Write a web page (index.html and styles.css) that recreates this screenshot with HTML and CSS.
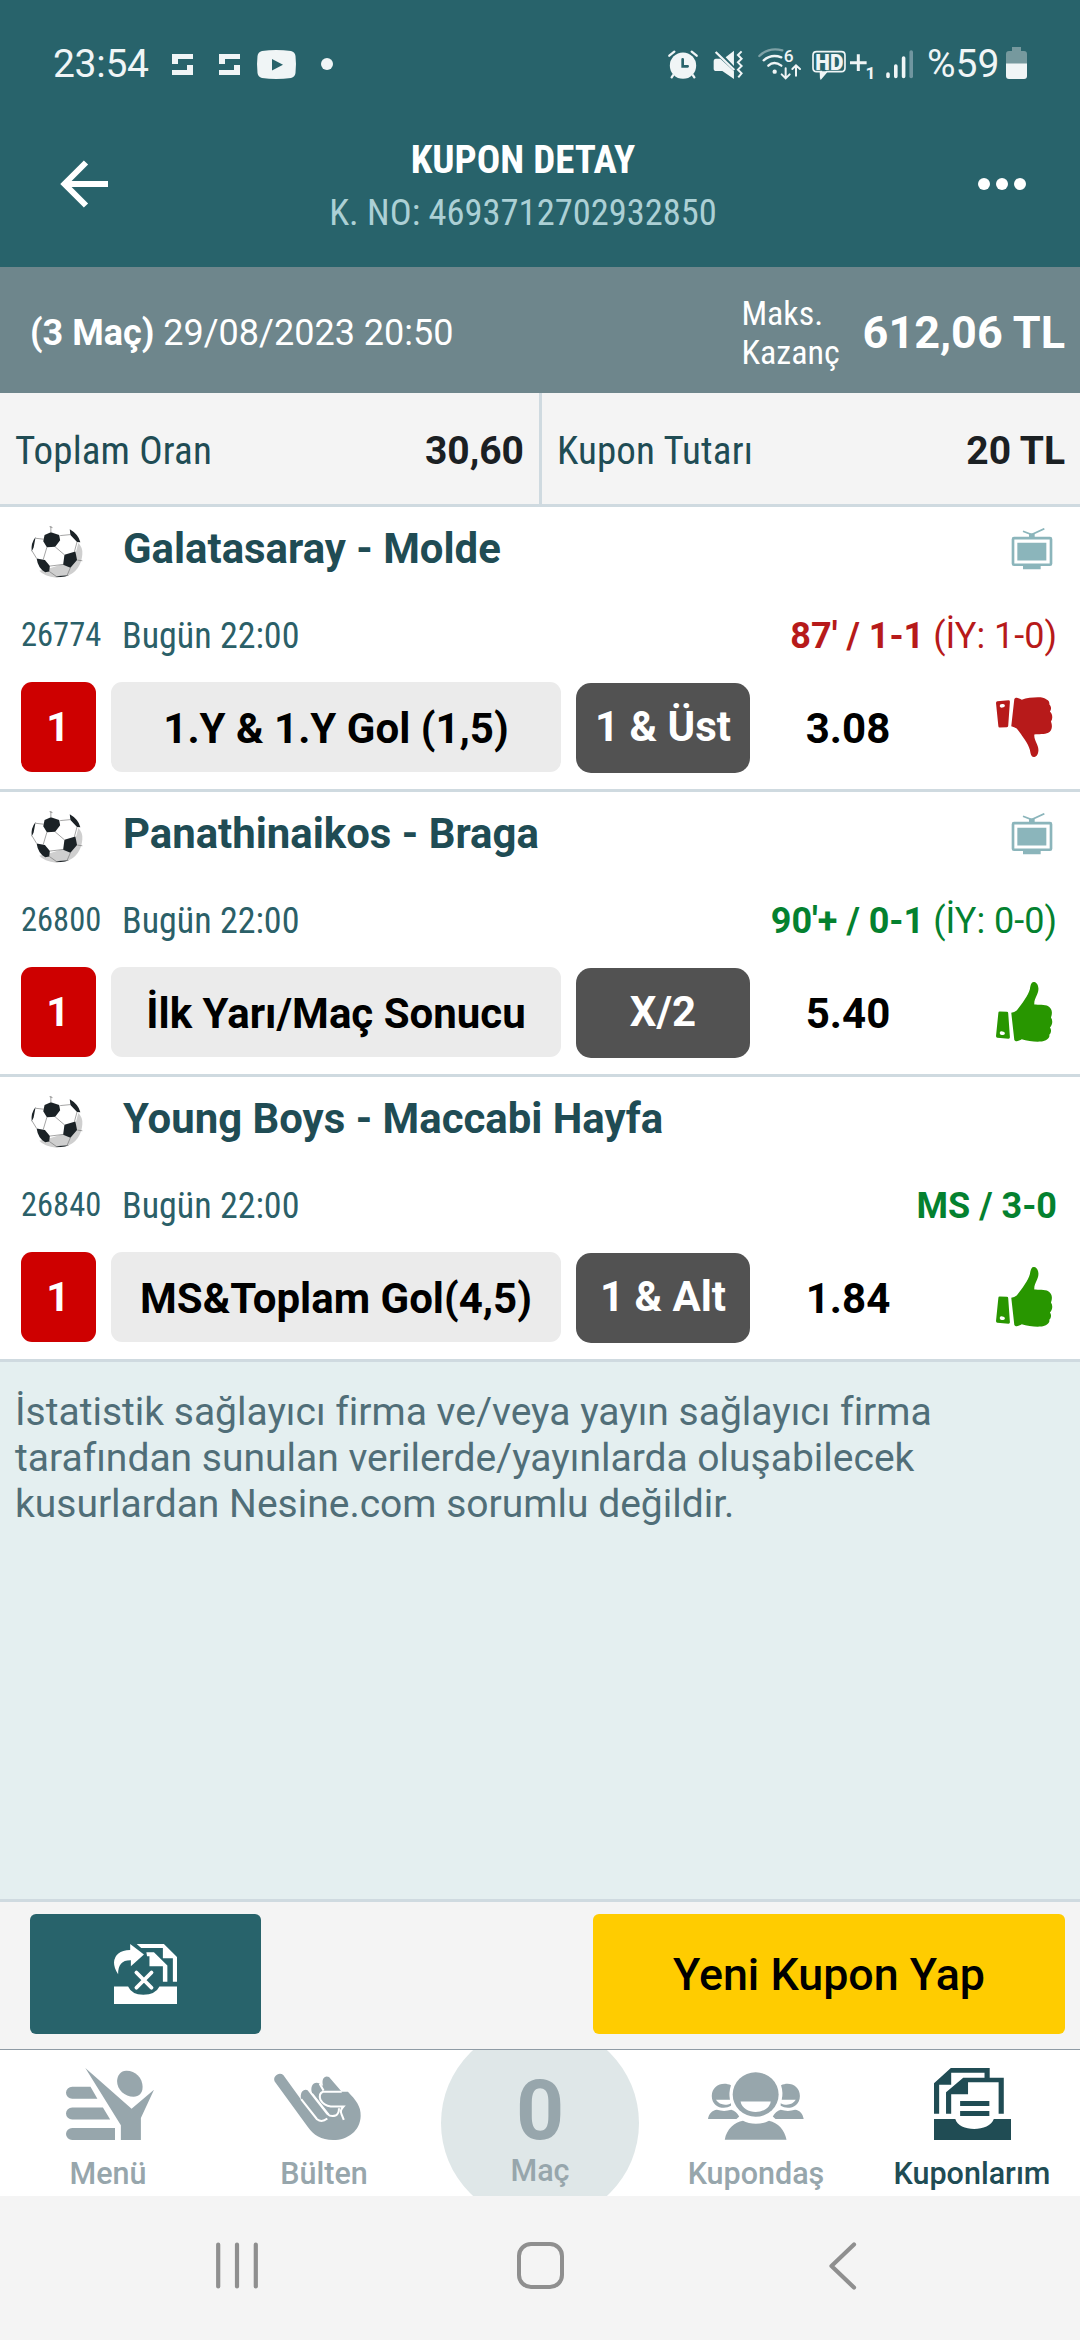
FILE: index.html
```
<!DOCTYPE html>
<html lang="tr">
<head>
<meta charset="utf-8">
<title>Kupon Detay</title>
<link rel="stylesheet" href="styles.css">
</head>
<body>
<svg class="defs" aria-hidden="true">
  <symbol id="ball" viewBox="30 30 160 160">
    <circle cx="111" cy="113" r="76" fill="#fff"/>
    <path d="M176 84Q190 98 188 118Q184 168 140 185L110 189Q72 184 58 168L92 160L130 148L150 156Q172 140 168 114Z" fill="#cfcfcf"/>
    <path d="M93 52L118 60L121 76L106 96L81 97L70 79L74 60ZM150 43Q176 58 182 82L172 81L152 60ZM47 66Q32 84 35 110L41 98ZM134 120L167 110L172 136L152 159L130 150ZM50 131L75 136L90 154L88 170L76 173Q54 160 50 131ZM106 185L148 182Q128 190 106 185Z" fill="#1b2226"/>
    <path d="M93 52V33M89 35L98 38M121 62L152 59M106 96L134 120M81 97L70 134M47 70L72 73M36 108L50 131M172 81L164 111M90 154L130 149M88 170L112 187M152 159L142 182M173 136L188 138" fill="none" stroke="#777" stroke-width="2"/>
  </symbol>
  <symbol id="tv" viewBox="1366 84 126 128" preserveAspectRatio="none">
    <rect x="1372" y="115" width="114" height="81" rx="3" fill="none" stroke="#8bb5bb" stroke-width="8"/>
    <path d="M1385 129h87v54h-87zM1402 198h53v12h-53zM1420 101h17v12h-17z" fill="#8bb5bb"/>
    <path d="M1402 94L1428 104L1466 86" fill="none" stroke="#8bb5bb" stroke-width="5"/>
  </symbol>
  <symbol id="thumb" viewBox="1324 590 168 181" preserveAspectRatio="none">
    <path d="M1328 603L1361 600Q1365 600 1365 604L1360 677Q1360 681 1356 681L1335 682Q1331 682 1331 678L1324 608Q1324 603 1328 603ZM1338 612Q1335 613 1335 618Q1336 623 1343 622Q1351 621 1350 615Q1349 610 1338 612Z" fill-rule="evenodd"/>
    <path d="M1378 596C1383 588 1392 594 1400 598C1418 591 1450 590 1462 592C1478 597 1483 605 1481 612C1487 618 1488 627 1483 634C1491 642 1492 655 1486 664C1492 680 1488 692 1478 698C1468 703 1448 702 1437 703C1435 722 1450 733 1449 752C1448 766 1441 771 1435 771C1428 771 1426 762 1424 750C1420 732 1400 705 1385 685Q1378 680 1369 678Z"/>
  </symbol>
</svg>

<header class="header">
  <div class="status">
    <span class="clock">23:54</span>
    <svg class="s-app" viewBox="0 0 21 21"><path d="M0 0H21V5H6V10H0ZM21 21H0V16H15V11H21Z" fill="#f0f5f6"/></svg>
    <svg class="s-app s-app2" viewBox="0 0 21 21"><path d="M0 0H21V5H6V10H0ZM21 21H0V16H15V11H21Z" fill="#f0f5f6"/></svg>
    <svg class="s-yt" viewBox="0 0 39 29"><path d="M5 1Q19-1 34 1Q38 2 38.500 6Q39.500 14 38.500 23Q38 27 34 28Q19 30 5 28Q1 27 .5 23Q-.5 14 .5 6Q1 2 5 1ZM15 9V20.500L26 14.700Z" fill="#f0f5f6"/></svg>
    <i class="s-dot"></i>
    <div class="status-right">
      <svg class="s-alarm" viewBox="53 28 90 87" fill="none" stroke="#f0f5f6" stroke-linecap="round">
        <circle cx="98" cy="75" r="39.500" fill="#f0f5f6" stroke="none"/>
        <path d="M57 45L72 33M139 45L124 33M68 104L64 110M128 104L132 110" stroke-width="7"/>
        <path d="M97 56V77H112" stroke="#28636b" stroke-width="8"/>
      </svg>
      <svg class="s-mute" viewBox="188 28 92 87">
        <path d="M190 62Q190 54 197 54H210L251 92V115L216 91H198Q190 91 190 84ZM251 30V76L226 50Z" fill="#f0f5f6"/>
        <path d="M196 34L252 88" stroke="#f0f5f6" stroke-width="7"/>
        <path d="M274 32L263 43L274 54L263 65L274 76L263 87L274 98L264 110" fill="none" stroke="#f0f5f6" stroke-width="6"/>
      </svg>
      <svg class="s-wifi" viewBox="322 25 132 96" fill="none" stroke="#f0f5f6" stroke-width="7" stroke-linecap="round">
        <path d="M326 49Q354 22 395 32" stroke="#7ea1a6"/>
        <path d="M339 62Q362 42 392 53M353 78Q370 62 392 78"/>
        <circle cx="372" cy="96" r="3" fill="#f0f5f6"/>
        <path d="M405 86V114M393 104L405 116L417 104M436 108V78M425 88L436 77L448 88" stroke-width="6"/>
        <text x="399" y="66" class="glyph six" font-size="52">6</text>
      </svg>
      <svg class="s-hd" viewBox="484 25 184 93">
        <path d="M498 33H572Q583 33 583 44V82Q583 93 572 93H528L512 112V93H498Q487 93 487 82V44Q487 33 498 33Z" fill="none" stroke="#f0f5f6" stroke-width="5"/>
        <path d="M507 92H532L508 116Z" fill="#f0f5f6"/>
        <text x="494" y="87" class="glyph hd" font-size="66" textLength="84" lengthAdjust="spacingAndGlyphs">HD</text>
        <path d="M598 66H648M623 41V91" stroke="#f0f5f6" stroke-width="9"/>
        <text x="645" y="115" class="glyph" font-size="52">1</text>
      </svg>
      <svg class="s-signal" viewBox="0 0 27 30" stroke-width="3.600" stroke-linecap="round" stroke="#f0f5f6"><path d="M2 25V27.500M9.800 17V27.500M17.600 9V27.500"/><path d="M25.200 3V27.500" stroke="#7096a0"/></svg>
      <span class="percent">%59</span>
      <svg class="s-batt" viewBox="0 0 21 32"><path d="M6 0H15V4H18Q21 4 21 7V17H0V7Q0 4 3 4H6Z" fill="#76999e"/><path d="M0 16.500H21V29Q21 32 18 32H3Q0 32 0 29Z" fill="#f0f5f6"/></svg>
    </div>
  </div>
  <div class="appbar">
    <svg class="back" viewBox="0 0 48 48"><path d="M48 24H6M26 2.500L4.500 24L26 45.500" fill="none" stroke="#fff" stroke-width="6"/></svg>
    <div class="titles">
      <h1>KUPON DETAY</h1>
      <p>K. NO: 4693712702932850</p>
    </div>
    <div class="more"><i></i><i></i><i></i></div>
  </div>
</header>

<section class="info">
  <p><b>(3 Maç)</b> 29/08/2023 20:50</p>
  <span class="max-label">Maks.<br>Kazanç</span>
  <strong>612,06 TL</strong>
</section>

<section class="totals">
  <div><span>Toplam Oran</span><b>30,60</b></div>
  <div><span>Kupon Tutarı</span><b>20 TL</b></div>
</section>

<main>
  <article class="match">
    <div class="teams"><svg class="ball"><use href="#ball"/></svg><h2>Galatasaray - Molde</h2><svg class="tv"><use href="#tv"/></svg></div>
    <div class="meta"><span class="code">26774</span><span class="time">Bugün 22:00</span><span class="score lost"><b>87' / 1-1</b> (İY: 1-0)</span></div>
    <div class="bet"><b class="mbs">1</b><b class="market">1.Y &amp; 1.Y Gol (1,5)</b><b class="pick">1 &amp; Üst</b><b class="odds">3.08</b><svg class="thumb down"><use href="#thumb"/></svg></div>
  </article>
  <article class="match">
    <div class="teams"><svg class="ball"><use href="#ball"/></svg><h2>Panathinaikos - Braga</h2><svg class="tv"><use href="#tv"/></svg></div>
    <div class="meta"><span class="code">26800</span><span class="time">Bugün 22:00</span><span class="score won"><b>90'+ / 0-1</b> (İY: 0-0)</span></div>
    <div class="bet"><b class="mbs">1</b><b class="market">İlk Yarı/Maç Sonucu</b><b class="pick">X/2</b><b class="odds">5.40</b><svg class="thumb up"><use href="#thumb"/></svg></div>
  </article>
  <article class="match">
    <div class="teams"><svg class="ball"><use href="#ball"/></svg><h2>Young Boys - Maccabi Hayfa</h2></div>
    <div class="meta"><span class="code">26840</span><span class="time">Bugün 22:00</span><span class="score won"><b>MS / 3-0</b></span></div>
    <div class="bet"><b class="mbs">1</b><b class="market">MS&amp;Toplam Gol(4,5)</b><b class="pick">1 &amp; Alt</b><b class="odds">1.84</b><svg class="thumb up"><use href="#thumb"/></svg></div>
  </article>
  <p class="note">İstatistik sağlayıcı firma ve/veya yayın sağlayıcı firma<br>tarafından sunulan verilerde/yayınlarda oluşabilecek<br>kusurlardan Nesine.com sorumlu değildir.</p>
</main>

<section class="actions">
  <button class="move" aria-label="Kuponu taşı">
    <svg viewBox="331 158 183 181" preserveAspectRatio="none">
      <g fill="#fff">
        <path d="M343 249Q331 232 331 214Q333 178 378 176V158L418 190L380 225V207Q342 206 343 249Z"/>
        <path d="M397 158H476L514 197V272H502V201H473V170H410Z"/>
        <path d="M425 183H447L486 223V272H473V225H434V195H427Z"/>
        <path d="M331 286H372Q382 310 416 311Q452 310 463 286H514V339H331Z"/>
      </g>
      <path d="M396 244L440 290M440 244L396 290" stroke="#fff" stroke-width="11" stroke-linecap="round"/>
    </svg>
  </button>
  <button class="new">Yeni Kupon Yap</button>
</section>

<nav class="tabs">
  <div class="tab">
    <svg class="i-menu" viewBox="192 535 255 215" preserveAspectRatio="none" fill="#97a6ac">
      <path d="M210 591H263L283 627H210A18 18 0 0 1 210 591ZM210 653H299L320 689H210A18 18 0 0 1 210 653ZM210 714H334V750H210A18 18 0 0 1 210 714Z"/>
      <path d="M248 535L382 657L447 600L409 684V750H351V706Z"/>
      <path d="M366 543C392 542 414 563 414 592C414 611 403 621 388 621C362 621 340 600 340 574C341 555 351 544 366 543Z"/>
    </svg>
    <span>Menü</span>
  </div>
  <div class="tab">
    <svg class="i-hand" viewBox="793 550 253 200" preserveAspectRatio="none">
      <path d="M795 575C788 560 808 545 820 556L872 630C867 605 880 595 893 602L904 612C896 588 910 573 926 582L936 589C930 568 940 556 953 562L990 606H1008C1032 632 1046 650 1045 678C1044 722 1008 750 965 750C930 750 908 735 892 712Z" fill="#97a6ac"/>
      <path d="M872 628L918 688Q932 699 948 686M893 600L948 672Q958 682 972 677Q982 672 982 655M926 582L937 602M990 606H935Q922 612 928 630Q938 648 958 650H995Q984 662 989 672L996 690" fill="none" stroke="#fff" stroke-width="6"/>
      <path d="M904 612L952 674" stroke="#fff" stroke-width="5"/>
    </svg>
    <span>Bülten</span>
  </div>
  <div class="tab slip">
    <i class="disc"></i>
    <b>0</b>
    <span>Maç</span>
  </div>
  <div class="tab">
    <svg class="i-people" viewBox="488 543 280 205" preserveAspectRatio="none" fill="#97a6ac">
      <circle cx="627" cy="611" r="67"/>
      <path d="M583 632H671C664 674 590 674 583 632Z" fill="#fff"/>
      <path d="M537 747C542 715 566 694 590 690C610 702 645 702 666 690C692 696 712 718 717 747Z"/>
      <path d="M555 583C530 570 499 585 499 615C499 650 535 658 555 645V637C540 646 520 642 511 627H552Q548 605 555 583ZM488 685C490 669 500 659 514 657Q535 664 556 657C566 660 574 668 579 677L571 685Z"/>
      <path d="M701 583C726 570 756 585 756 615C756 650 720 658 700 645V637C715 646 736 642 744 627H703Q708 605 701 583ZM767 685C765 669 756 659 742 657Q721 664 700 657C690 660 682 668 677 677L685 685Z"/>
    </svg>
    <span>Kupondaş</span>
  </div>
  <div class="tab active">
    <svg class="i-coupons" viewBox="1141 534 224 216" preserveAspectRatio="none" fill="#204c54">
      <path d="M1190 534H1303V563H1344V671H1329V577H1240V613H1191V671H1176V607L1226 563H1288V548H1191V584H1156V671H1141V580Z"/>
      <path d="M1217 633H1302V648H1217ZM1217 663H1302V678H1217Z"/>
      <path d="M1141 687H1203C1212 727 1303 727 1315 687H1365V750H1141Z"/>
    </svg>
    <span>Kuponlarım</span>
  </div>
</nav>

<footer class="sysnav">
  <svg class="n-recent" viewBox="0 0 42 47"><path d="M2.200 2.500V44.500M21 2.500V44.500M39.800 2.500V44.500" stroke="#8f8f8f" stroke-width="4.200" stroke-linecap="round"/></svg>
  <i class="n-home"></i>
  <svg class="n-back" viewBox="0 0 27 48"><path d="M25 2.500L2.500 24L25 45.500" fill="none" stroke="#8f8f8f" stroke-width="4.200" stroke-linecap="round" stroke-linejoin="round"/></svg>
</footer>
</body>
</html>
```
FILE: styles.css
```
* { box-sizing: border-box; }
html, body { margin: 0; padding: 0; }
body {
  width: 1080px;
  height: 2340px;
  overflow: hidden;
  display: flex;
  flex-direction: column;
  font-family: Roboto, "Liberation Sans", sans-serif;
  background: #e4eff0;
}
h1, h2, p { margin: 0; }
svg { display: block; flex: none; overflow: visible; }
.defs { position: absolute; width: 0; height: 0; }

.header { height: 267px; background: #28636b; flex: none; }
.status {
  height: 128px;
  display: flex;
  align-items: center;
  padding: 0 53px 0 53px;
  color: #f0f5f6;
  font-size: 39px;
  line-height: 46px;
}
.clock { width: 119px; letter-spacing: -0.3px; }
.s-app { width: 21px; height: 21px; }
.s-app2 { margin-left: 26px; }
.s-yt { width: 39px; height: 29px; margin-left: 17px; }
.s-dot { width: 12px; height: 12px; border-radius: 50%; background: #f0f5f6; margin-left: 25px; }
.status-right { display: flex; align-items: center; margin-left: auto; }
.s-alarm { width: 30px; height: 29px; }
.s-mute { width: 30.600px; height: 29px; margin-left: 15px; }
.s-wifi { width: 44px; height: 32px; margin-left: 14px; }
.s-hd { width: 61.300px; height: 31px; margin-left: 10px; }
.s-signal { width: 27px; height: 30px; margin-left: 13px; }
.percent { margin-left: 14px; width: 73px; }
.s-batt { width: 21px; height: 32px; margin-left: 6px; margin-top: -2px; }
.glyph { fill: #f0f5f6; stroke: none; font-family: Roboto, sans-serif; font-weight: 700; }
.six { font-weight: 500; stroke: #28636b; stroke-width: 6px; paint-order: stroke; }
.hd { font-weight: 900; }

.appbar {
  height: 111px;
  display: flex;
  align-items: center;
  padding: 0 54px 0 60px;
}
.back { width: 48px; height: 48px; }
.titles {
  width: 830px;
  font-family: "Roboto Condensed", Roboto, sans-serif;
  text-align: center;
  line-height: 51.500px;
  padding-top: 6px;
}
.titles h1 { font-size: 39px; font-weight: 700; color: #fff; }
.titles p { font-size: 36.500px; color: #acd0d5; }
.more { display: flex; gap: 6px; margin-left: auto; }
.more i { width: 12px; height: 12px; border-radius: 50%; background: #fff; }

.info {
  flex: none;
  height: 126px;
  background: #6e868c;
  color: #fff;
  display: flex;
  align-items: center;
  padding: 5px 15px 0 30px;
  font-size: 36px;
}
.max-label {
  font: 400 34px/39px "Roboto Condensed", Roboto, sans-serif;
  margin-left: auto;
}
.info strong { font-size: 45px; margin-left: 23px; }

.totals {
  flex: none;
  height: 114px;
  display: grid;
  grid-template-columns: 542px 1fr;
  background: #f4f4f4;
  border-bottom: 3px solid #cfdae0;
  font-size: 39px;
}
.totals div {
  display: flex;
  align-items: center;
  justify-content: space-between;
  padding: 4px 15px 0 15px;
}
.totals div:first-child { border-right: 3px solid #cfdae0; }
.totals span { font-family: "Roboto Condensed", Roboto, sans-serif; color: #204c54; letter-spacing: 0.15px; }
.totals b { color: #1b2023; }

main { flex: 1; }
.match {
  height: 285px;
  background: #fff;
  border-bottom: 3px solid #cfdae0;
}
.teams { height: 84px; display: flex; align-items: center; padding: 0 27px 0 30px; }
.ball { width: 53px; height: 53px; margin-top: 5px; }
.teams h2 { font-size: 41.900px; line-height: 50px; color: #204c54; margin-left: 40px; }
.tv { width: 42px; height: 42px; margin-left: auto; }
.meta {
  height: 91px;
  display: flex;
  align-items: center;
  padding: 0 23px 2px 21px;
  color: #2b6068;
}
.code { font: 400 32.500px/38px "Roboto Condensed", Roboto, sans-serif; width: 101px; margin-top: -2px; }
.time { font: 400 36px/42px "Roboto Condensed", Roboto, sans-serif; }
.score { font-size: 36px; line-height: 42px; margin-left: auto; }
.lost { color: #b71a1a; }
.won { color: #04812f; }
.bet {
  height: 90px;
  display: grid;
  grid-template-columns: 75px 450px 174px 166px 57px;
  column-gap: 15px;
  padding-left: 21px;
  align-items: start;
  text-align: center;
  font-size: 42px;
}
.bet b { line-height: 90px; height: 90px; }
.mbs { background: #ce0000; color: #fff; border-radius: 11px; padding-right: 1px; font-size: 41px; }
.bet .market { background: #ebebeb; color: #000; border-radius: 11px; line-height: 93px; }
.bet .pick { background: #525252; color: #fff; border-radius: 15px; margin-top: 1px; line-height: 88px; }
.bet .odds { line-height: 93px; }
.thumb { width: 57px; height: 60px; margin: 15px 0 0 50px; }
.down { fill: #b71a1a; }
.up { fill: #289600; transform: scaleY(-1); }

.note { padding: 28px 15px 0; font-size: 39px; line-height: 45.800px; color: #506e78; white-space: nowrap; }

.actions {
  flex: none;
  height: 151px;
  background: #f4f4f4;
  border-top: 3px solid #cfdae0;
  border-bottom: 1px solid #8f9ba5;
  display: flex;
  justify-content: space-between;
  padding: 12px 15px 15px 30px;
}
button { border: 0; padding: 0; border-radius: 6px; height: 120px; }
.move { width: 231px; background: #28636b; display: flex; align-items: center; justify-content: center; }
.move svg { width: 63px; height: 60px; margin-top: -1px; }
.new {
  width: 472px;
  background: #ffcc00;
  color: #000;
  font: 500 44.800px/120px Roboto, sans-serif;
  padding-top: 1px;
}

.tabs {
  flex: none;
  height: 146px;
  background: #fff;
  display: grid;
  grid-template-columns: repeat(5, 1fr);
  overflow: hidden;
}
.tab {
  position: relative;
  display: flex;
  flex-direction: column;
  align-items: center;
  justify-content: flex-end;
  padding-bottom: 5px;
  font-size: 30.500px;
  font-weight: 500;
  line-height: 35px;
  color: #97a6ac;
}
.tab svg { margin-bottom: 16px; }
.i-menu { width: 88px; height: 72px; margin-left: 4px; }
.i-hand { width: 87px; height: 67px; margin-right: 14px; }
.i-people { width: 96px; height: 68px; }
.i-coupons { width: 77px; height: 72px; }
.active { color: #204c54; }
.slip { padding-bottom: 8px; }
.slip b { position: relative; font-size: 84px; line-height: 66px; margin-bottom: 9px; }
.slip span { position: relative; }
.disc {
  position: absolute;
  left: 9px;
  top: -26px;
  width: 198px;
  height: 198px;
  border-radius: 50%;
  background: #dfe7e8;
}

.sysnav {
  flex: none;
  height: 144px;
  background: #f4f4f4;
  display: flex;
  align-items: center;
  padding: 0 224px 5px 216px;
  justify-content: space-between;
}
.n-recent { width: 42px; height: 47px; }
.n-home { width: 47px; height: 47px; border: 4.500px solid #8f8f8f; border-radius: 14px; margin-right: 7px; }
.n-back { width: 27px; height: 48px; }
```
